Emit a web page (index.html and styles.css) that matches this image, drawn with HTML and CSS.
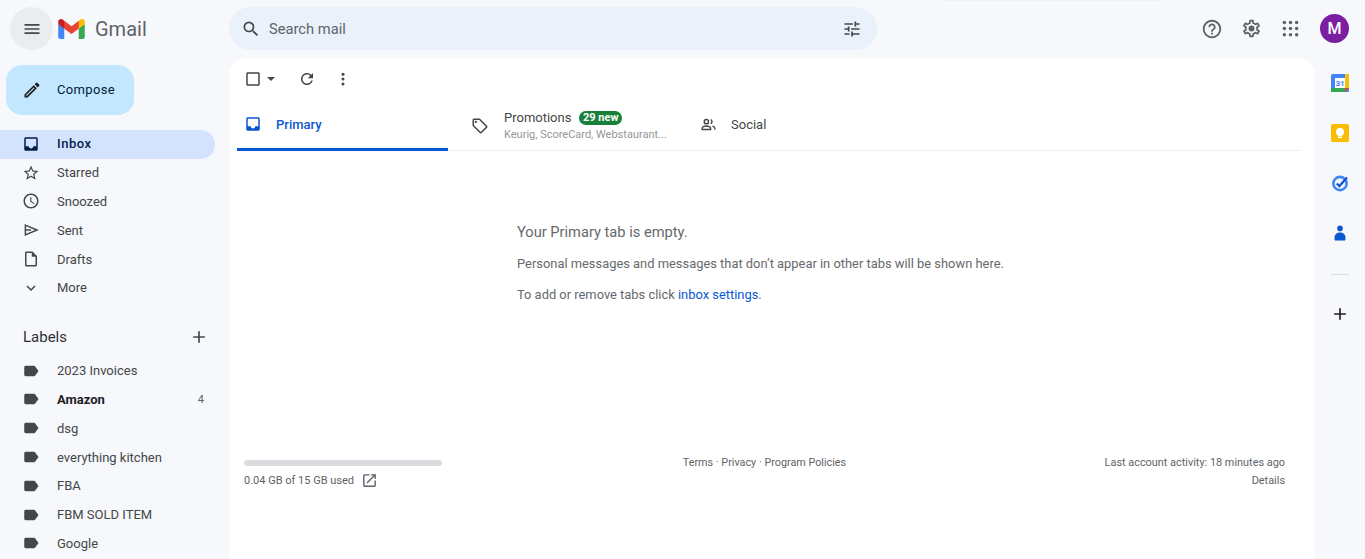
FILE: index.html
```html
<!DOCTYPE html>
<html lang="en">
<head>
  <meta charset="UTF-8">
  <title>Inbox - Gmail</title>
  <link rel="stylesheet" href="styles.css">
</head>
<body>
  <div class="app">
    <div class="top-hint"></div>

    <header class="topbar">
      <div class="brand">
        <button class="menu-btn">
          <svg class="ico" viewBox="0 0 24 24"><path d="M3 18h18v-2H3v2zm0-5h18v-2H3v2zm0-7v2h18V6H3z"/></svg>
        </button>
        <svg class="logo" viewBox="0 0 256 193">
          <path fill="#4285F4" d="M58.182 192.05V93.14L27.507 65.077 0 49.504v125.091c0 9.658 7.825 17.455 17.455 17.455h40.727z"/>
          <path fill="#34A853" d="M197.818 192.05h40.727c9.659 0 17.455-7.826 17.455-17.455V49.505l-31.156 17.837-27.026 25.798v98.91z"/>
          <path fill="#EA4335" d="M58.182 93.14l-4.174-38.647 4.174-36.989L128 69.868l69.818-52.364 4.669 34.992-4.669 40.644L128 145.504z"/>
          <path fill="#FBBC04" d="M197.818 17.504V93.14L256 49.504V26.231c0-21.585-24.64-33.89-41.89-20.945l-16.292 12.218z"/>
          <path fill="#C5221F" d="M0 49.504l26.759 20.07L58.182 93.14V17.504L41.89 5.286C24.61-7.66 0 4.646 0 26.23v23.273z"/>
        </svg>
        <span class="wordmark">Gmail</span>
      </div>

      <div class="search">
        <svg class="ico search-ico" viewBox="0 0 24 24"><path d="M15.5 14h-.79l-.28-.27A6.471 6.471 0 0 0 16 9.5 6.5 6.5 0 1 0 9.5 16c1.61 0 3.09-.59 4.23-1.57l.27.28v.79l5 4.99L20.49 19l-4.99-5zm-6 0C7.01 14 5 11.99 5 9.5S7.01 5 9.5 5 14 7.01 14 9.5 11.99 14 9.5 14z"/></svg>
        <span class="search-text">Search mail</span>
        <svg class="ico tune-ico" viewBox="0 0 24 24"><path d="M3 17v2h6v-2H3zM3 5v2h10V5H3zm10 16v-2h8v-2h-8v-2h-2v6h2zM7 9v2H3v2h4v2h2V9H7zm14 4v-2H11v2h10zm-6-4h2V7h4V5h-4V3h-2v6z"/></svg>
      </div>

      <div class="top-actions">
        <svg class="ico help-ico" viewBox="0 0 24 24"><path d="M11 18h2v-2h-2v2zm1-16C6.48 2 2 6.48 2 12s4.48 10 10 10 10-4.48 10-10S17.52 2 12 2zm0 18c-4.41 0-8-3.59-8-8s3.59-8 8-8 8 3.59 8 8-3.59 8-8 8zm0-14c-2.21 0-4 1.79-4 4h2c0-1.1.9-2 2-2s2 .9 2 2c0 2-3 1.75-3 5h2c0-2.25 3-2.5 3-5 0-2.21-1.79-4-4-4z"/></svg>
        <svg class="ico" viewBox="0 0 24 24"><path d="M19.43 12.98c.04-.32.07-.64.07-.98 0-.34-.03-.66-.07-.98l2.11-1.65c.19-.15.24-.42.12-.64l-2-3.46c-.09-.16-.26-.25-.44-.25-.06 0-.12.01-.17.03l-2.49 1c-.52-.4-1.08-.73-1.69-.98l-.38-2.65C14.46 2.18 14.25 2 14 2h-4c-.25 0-.46.18-.49.42l-.38 2.65c-.61.25-1.17.59-1.69.98l-2.49-1c-.06-.02-.12-.03-.18-.03-.17 0-.34.09-.43.25l-2 3.46c-.13.22-.07.49.12.64l2.11 1.65c-.04.32-.07.65-.07.98 0 .33.03.66.07.98l-2.11 1.65c-.19.15-.24.42-.12.64l2 3.46c.09.16.26.25.44.25.06 0 .12-.01.17-.03l2.49-1c.52.4 1.08.73 1.69.98l.38 2.65c.03.24.24.42.49.42h4c.25 0 .46-.18.49-.42l.38-2.65c.61-.25 1.17-.59 1.69-.98l2.49 1c.06.02.12.03.18.03.17 0 .34-.09.43-.25l2-3.46c.12-.22.07-.49-.12-.64l-2.11-1.65zm-1.98-1.71c.04.31.05.52.05.73 0 .21-.02.43-.05.73l-.14 1.13.89.7 1.08.84-.7 1.21-1.27-.51-1.04-.42-.9.68c-.43.32-.84.56-1.25.73l-1.06.43-.16 1.13-.2 1.35h-1.4l-.19-1.35-.16-1.13-1.06-.43c-.43-.18-.83-.41-1.23-.71l-.91-.7-1.06.43-1.27.51-.7-1.21 1.08-.84.89-.7-.14-1.13c-.03-.31-.05-.54-.05-.74s.02-.43.05-.73l.14-1.13-.89-.7-1.08-.84.7-1.21 1.27.51 1.04.42.9-.68c.43-.32.84-.56 1.25-.73l1.06-.43.16-1.13.2-1.35h1.39l.19 1.35.16 1.13 1.06.43c.43.18.83.41 1.23.71l.91.7 1.06-.43 1.27-.51.7 1.21-1.07.85-.89.7.14 1.13z"/><circle cx="12" cy="12" r="3.4"/></svg>
        <svg class="ico" viewBox="0 0 24 24"><circle cx="5" cy="5" r="2"/><circle cx="12" cy="5" r="2"/><circle cx="19" cy="5" r="2"/><circle cx="5" cy="12" r="2"/><circle cx="12" cy="12" r="2"/><circle cx="19" cy="12" r="2"/><circle cx="5" cy="19" r="2"/><circle cx="12" cy="19" r="2"/><circle cx="19" cy="19" r="2"/></svg>
        <div class="avatar">M</div>
      </div>
    </header>

    <nav class="sidebar">
      <button class="compose">
        <svg class="ico" viewBox="0 0 24 24"><path d="M3 17.25V21h3.75L17.81 9.94l-3.75-3.75L3 17.25zM5.92 19H5v-.92l9.06-9.06.92.92L5.92 19zM20.71 5.63l-2.34-2.34a1 1 0 0 0-1.41 0l-1.83 1.83 3.75 3.75 1.83-1.83a1 1 0 0 0 0-1.41z"/></svg>
        <span>Compose</span>
      </button>

      <ul class="nav-list">
        <li class="nav-item active">
          <svg class="ico" viewBox="0 0 24 24"><path d="M19 3H4.99C3.88 3 3 3.9 3 5v14c0 1.1.88 2 1.99 2H19c1.1 0 2-.9 2-2V5c0-1.1-.9-2-2-2zm0 12h-4c0 1.66-1.35 3-3 3s-3-1.34-3-3H4.99V5H19v10z"/></svg>
          <span>Inbox</span>
        </li>
        <li class="nav-item">
          <svg class="ico" viewBox="0 0 24 24"><path d="M22 9.24l-7.19-.62L12 2 9.19 8.63 2 9.24l5.46 4.73L5.82 21 12 17.27 18.18 21l-1.63-7.03L22 9.24zM12 15.4l-3.76 2.27 1-4.28-3.32-2.88 4.38-.38L12 6.1l1.71 4.04 4.38.38-3.32 2.88 1 4.28L12 15.4z"/></svg>
          <span>Starred</span>
        </li>
        <li class="nav-item">
          <svg class="ico" viewBox="0 0 24 24"><path d="M11.99 2C6.47 2 2 6.48 2 12s4.47 10 9.99 10C17.52 22 22 17.52 22 12S17.52 2 11.99 2zM12 20c-4.42 0-8-3.58-8-8s3.58-8 8-8 8 3.58 8 8-3.58 8-8 8zm.5-13H11v6l5.25 3.15.75-1.23-4.5-2.67z"/></svg>
          <span>Snoozed</span>
        </li>
        <li class="nav-item">
          <svg class="ico" viewBox="0 0 24 24"><path fill="none" stroke="#444746" stroke-width="2" d="M4.5 5.5L20 12 4.5 18.5zM4.5 12H12"/></svg>
          <span>Sent</span>
        </li>
        <li class="nav-item">
          <svg class="ico" viewBox="0 0 24 24"><path d="M14 2H6c-1.1 0-2 .9-2 2v16c0 1.1.9 2 2 2h12c1.1 0 2-.9 2-2V8l-6-6zM6 20V4h7v5h5v11H6z"/></svg>
          <span>Drafts</span>
        </li>
        <li class="nav-item">
          <svg class="ico" viewBox="0 0 24 24"><path d="M16.59 8.59L12 13.17 7.41 8.59 6 10l6 6 6-6z"/></svg>
          <span>More</span>
        </li>
      </ul>

      <div class="labels-head">
        <span>Labels</span>
        <svg class="ico" viewBox="0 0 24 24"><path d="M19 13h-6v6h-2v-6H5v-2h6V5h2v6h6v2z"/></svg>
      </div>

      <ul class="nav-list">
        <li class="nav-item">
          <svg class="ico" viewBox="0 0 24 24"><path d="M17.63 5.84C17.27 5.33 16.67 5 16 5L5 5.01C3.9 5.01 3 5.9 3 7v10c0 1.1.9 1.99 2 1.99L16 19c.67 0 1.27-.33 1.63-.84L22 12l-4.37-6.16z"/></svg>
          <span>2023 Invoices</span>
        </li>
        <li class="nav-item unread">
          <svg class="ico" viewBox="0 0 24 24"><path d="M17.63 5.84C17.27 5.33 16.67 5 16 5L5 5.01C3.9 5.01 3 5.9 3 7v10c0 1.1.9 1.99 2 1.99L16 19c.67 0 1.27-.33 1.63-.84L22 12l-4.37-6.16z"/></svg>
          <span>Amazon</span>
          <span class="count">4</span>
        </li>
        <li class="nav-item">
          <svg class="ico" viewBox="0 0 24 24"><path d="M17.63 5.84C17.27 5.33 16.67 5 16 5L5 5.01C3.9 5.01 3 5.9 3 7v10c0 1.1.9 1.99 2 1.99L16 19c.67 0 1.27-.33 1.63-.84L22 12l-4.37-6.16z"/></svg>
          <span>dsg</span>
        </li>
        <li class="nav-item">
          <svg class="ico" viewBox="0 0 24 24"><path d="M17.63 5.84C17.27 5.33 16.67 5 16 5L5 5.01C3.9 5.01 3 5.9 3 7v10c0 1.1.9 1.99 2 1.99L16 19c.67 0 1.27-.33 1.63-.84L22 12l-4.37-6.16z"/></svg>
          <span>everything kitchen</span>
        </li>
        <li class="nav-item">
          <svg class="ico" viewBox="0 0 24 24"><path d="M17.63 5.84C17.27 5.33 16.67 5 16 5L5 5.01C3.9 5.01 3 5.9 3 7v10c0 1.1.9 1.99 2 1.99L16 19c.67 0 1.27-.33 1.63-.84L22 12l-4.37-6.16z"/></svg>
          <span>FBA</span>
        </li>
        <li class="nav-item">
          <svg class="ico" viewBox="0 0 24 24"><path d="M17.63 5.84C17.27 5.33 16.67 5 16 5L5 5.01C3.9 5.01 3 5.9 3 7v10c0 1.1.9 1.99 2 1.99L16 19c.67 0 1.27-.33 1.63-.84L22 12l-4.37-6.16z"/></svg>
          <span>FBM SOLD ITEM</span>
        </li>
        <li class="nav-item">
          <svg class="ico" viewBox="0 0 24 24"><path d="M17.63 5.84C17.27 5.33 16.67 5 16 5L5 5.01C3.9 5.01 3 5.9 3 7v10c0 1.1.9 1.99 2 1.99L16 19c.67 0 1.27-.33 1.63-.84L22 12l-4.37-6.16z"/></svg>
          <span>Google</span>
        </li>
      </ul>
    </nav>

    <main class="mail">
      <div class="toolbar">
        <div class="select-box">
          <svg class="ico" viewBox="0 0 24 24"><path d="M19 5v14H5V5h14m0-2H5c-1.1 0-2 .9-2 2v14c0 1.1.9 2 2 2h14c1.1 0 2-.9 2-2V5c0-1.1-.9-2-2-2z"/></svg>
          <span class="caret"></span>
        </div>
        <svg class="ico" viewBox="0 0 24 24"><path d="M17.65 6.35A7.958 7.958 0 0 0 12 4c-4.42 0-7.99 3.58-7.99 8s3.57 8 7.99 8c3.73 0 6.84-2.55 7.73-6h-2.08A5.99 5.99 0 0 1 12 18c-3.31 0-6-2.69-6-6s2.69-6 6-6c1.66 0 3.14.69 4.22 1.78L13 11h7V4l-2.35 2.35z"/></svg>
        <svg class="ico" viewBox="0 0 24 24"><circle cx="12" cy="5.5" r="2"/><circle cx="12" cy="12" r="2"/><circle cx="12" cy="18.5" r="2"/></svg>
      </div>

      <div class="tabs">
        <div class="tab primary">
          <svg class="ico" viewBox="0 0 24 24"><path d="M19 3H4.99C3.88 3 3 3.9 3 5v14c0 1.1.88 2 1.99 2H19c1.1 0 2-.9 2-2V5c0-1.1-.9-2-2-2zm0 12h-4c0 1.66-1.35 3-3 3s-3-1.34-3-3H4.99V5H19v10z"/></svg>
          <span>Primary</span>
        </div>
        <div class="tab promotions">
          <svg class="ico" viewBox="0 0 24 24"><path d="M21.41 11.58l-9-9C12.05 2.22 11.55 2 11 2H4c-1.1 0-2 .9-2 2v7c0 .55.22 1.05.59 1.42l9 9c.36.36.86.58 1.41.58.55 0 1.05-.22 1.41-.59l7-7c.37-.36.59-.86.59-1.41 0-.55-.23-1.06-.59-1.42zM13 20.01L4 11V4h7v-.01l9 9-7 7.02z"/><circle cx="6.5" cy="6.5" r="1.5"/></svg>
          <div>
            <div class="promo-title">
              <span>Promotions</span>
              <span class="badge">29 new</span>
            </div>
            <div class="promo-sub">Keurig, ScoreCard, Webstaurant...</div>
          </div>
        </div>
        <div class="tab social">
          <svg class="ico" viewBox="0 0 24 24"><g fill="none" stroke="#444746" stroke-width="2"><circle cx="9" cy="8" r="3"/><path d="M3 19v-1.5C3 15.5 6 14 9 14s6 1.5 6 3.5V19zM15 5.2a3 3 0 0 1 0 5.6M17.5 14.3c2 .5 3.5 1.7 3.5 3.2V19"/></g></svg>
          <span>Social</span>
        </div>
      </div>

      <div class="empty">
        <h2>Your Primary tab is empty.</h2>
        <p>Personal messages and messages that don’t appear in other tabs will be shown here.</p>
        <p>To add or remove tabs click <a href="#">inbox settings</a>.</p>
      </div>

      <footer class="foot">
        <div class="storage">
          <div class="storage-bar"></div>
          <div class="storage-text">
            <span>0.04 GB of 15 GB used</span>
            <svg class="ico" viewBox="0 0 24 24"><path d="M19 19H5V5h7V3H5a2 2 0 0 0-2 2v14c0 1.1.9 2 2 2h14c1.1 0 2-.9 2-2v-7h-2v7zM14 3v2h3.59l-9.83 9.83 1.41 1.41L19 6.41V10h2V3h-7z"/></svg>
          </div>
        </div>
        <div class="foot-links">Terms · Privacy · Program Policies</div>
        <div class="activity">
          <div>Last account activity: 18 minutes ago</div>
          <div>Details</div>
        </div>
      </footer>
    </main>

    <aside class="rail">
      <svg class="rail-ico" viewBox="0 0 18 18">
        <rect width="18" height="18" rx="1.5" fill="#4285f4"/>
        <rect x="4" y="4" width="10" height="10" fill="#fff"/>
        <rect y="14" width="14" height="4" fill="#34a853"/>
        <rect x="14" width="4" height="14" fill="#fbbc04"/>
        <path d="M14 14h4l-4 4z" fill="#ea4335"/>
        <text x="9" y="12" class="cal-num">31</text>
      </svg>
      <svg class="rail-ico" viewBox="0 0 18 18">
        <rect width="18" height="18" rx="1.5" fill="#fbbc04"/>
        <circle cx="9" cy="8" r="4" fill="#fff"/>
        <rect x="7" y="12.4" width="4" height="1.8" fill="#fff"/>
      </svg>
      <svg class="rail-ico" viewBox="0 0 18 18">
        <circle cx="9" cy="9.5" r="6.6" fill="none" stroke="#4285f4" stroke-width="2.6"/>
        <path d="M5.8 9.5l2.6 2.6 7.6-8.6" fill="none" stroke="#0b57d0" stroke-width="2.2"/>
      </svg>
      <svg class="rail-ico" viewBox="0 0 18 18">
        <circle cx="9" cy="4.4" r="2.8" fill="#0b57d0"/>
        <path d="M3.6 15.5v-2.2C3.6 10.6 6.2 8.6 9 8.6s5.4 2 5.4 4.7v2.2c0 .6-.4 1-1 1H4.6c-.6 0-1-.4-1-1z" fill="#0b57d0"/>
      </svg>
      <div class="rail-line"></div>
      <svg class="ico rail-add" viewBox="0 0 24 24"><path d="M19 13h-6v6h-2v-6H5v-2h6V5h2v6h6v2z"/></svg>
    </aside>

  </div>
</body>
</html>
```

FILE: styles.css
```css
* {
  margin: 0;
  padding: 0;
  box-sizing: border-box;
}

html, body {
  height: 100%;
  overflow: hidden;
}

body {
  background-color: #f6f8fc;
  color: #444746;
  font-family: Roboto, "Liberation Sans", sans-serif;
  font-size: 13px;
}

ul {
  list-style: none;
}

button {
  border: 0;
  font-family: inherit;
}

.ico {
  display: block;
  width: 20px;
  height: 20px;
  flex: none;
  fill: #444746;
}

.app {
  display: grid;
  grid-template-columns: 229px 1fr 50px;
  grid-template-rows: 58px 1fr;
  height: 100%;
}

/* faint sliver of a notice at the very top edge */
.top-hint {
  position: absolute;
  top: 0;
  left: 940px;
  width: 225px;
  height: 1px;
  background-color: #f0f2f6;
}

/* top bar */
.topbar {
  grid-column: 1 / 4;
  display: flex;
  align-items: center;
  height: 57px;
}

.brand {
  display: flex;
  align-items: center;
  width: 229px;
  padding-left: 10px;
}

.menu-btn {
  display: flex;
  align-items: center;
  justify-content: center;
  width: 43px;
  height: 43px;
  border-radius: 50%;
  background-color: #ebecef;
}

.logo {
  width: 27px;
  height: 20px;
  margin-left: 5px;
}

.wordmark {
  margin-left: 10px;
  font-size: 20px;
  color: #5f6368;
}

.search {
  display: flex;
  align-items: center;
  width: 648px;
  height: 43px;
  padding: 0 15px 0 12px;
  border-radius: 22px;
  background-color: #eaf1fb;
}

.search-text {
  flex: 1;
  margin-left: 8px;
  font-size: 14.7px;
  color: #5f6368;
}

.top-actions {
  display: flex;
  align-items: center;
  margin-left: auto;
  padding-right: 16px;
  gap: 18px;
}

.top-actions .ico {
  width: 21px;
  height: 21px;
  fill: #5f6368;
}

.top-actions .help-ico {
  width: 22px;
  height: 22px;
}

.avatar {
  width: 29px;
  height: 29px;
  margin-left: 1px;
  border-radius: 50%;
  background-color: #7b1fa2;
  color: #fff;
  font-size: 16px;
  font-weight: 500;
  line-height: 29px;
  text-align: center;
}

/* sidebar */
.sidebar {
  overflow: hidden;
}

.compose {
  display: flex;
  align-items: center;
  width: 128px;
  height: 50px;
  margin: 7px 0 15px 6px;
  padding: 0 0 1px 16px;
  border-radius: 16px;
  background-color: #c2e7ff;
  color: #001d35;
  font-size: 13px;
  letter-spacing: .35px;
  gap: 15px;
}

.compose .ico {
  fill: #1f1f1f;
}

.nav-item {
  display: flex;
  align-items: center;
  width: 215px;
  height: 28.8px;
  padding: 0 11px 1px 22px;
  border-radius: 0 16px 16px 0;
  gap: 17px;
}

.nav-item .ico {
  width: 18px;
  height: 18px;
}

.nav-item.active {
  background-color: #d3e3fd;
  color: #041e49;
  font-weight: 500;
  letter-spacing: .5px;
}

.nav-item.active .ico {
  fill: #041e49;
}

.nav-item.unread {
  color: #202124;
  font-weight: 700;
}

.count {
  margin-left: auto;
  font-size: 11px;
  font-weight: 400;
  color: #5f6368;
}

.labels-head {
  display: flex;
  align-items: center;
  justify-content: space-between;
  width: 215px;
  height: 36px;
  margin-top: 16px;
  margin-bottom: 2px;
  padding: 0 6px 0 23px;
  font-size: 15px;
  color: #303134;
}

/* mail panel */
.mail {
  display: flex;
  flex-direction: column;
  padding: 0 14px 0 8px;
  border-radius: 16px 16px 0 0;
  background-color: #fff;
  overflow: hidden;
}

.toolbar {
  display: flex;
  align-items: center;
  height: 42px;
  padding-left: 7px;
}

.toolbar .ico {
  width: 18px;
  height: 18px;
  margin-right: 18px;
}

.select-box {
  display: flex;
  align-items: center;
  width: 54px;
}

.select-box .ico {
  margin-right: 5px;
}

.caret {
  width: 0;
  height: 0;
  border-top: 4px solid #444746;
  border-left: 4px solid transparent;
  border-right: 4px solid transparent;
}

.tabs {
  display: flex;
  height: 51px;
  border-bottom: 1px solid #eceff1;
}

.tab {
  display: flex;
  align-items: center;
  height: 48px;
}

.tab .ico {
  width: 18px;
  height: 18px;
}

.primary {
  width: 211px;
  height: 51px;
  padding-left: 7px;
  border-bottom: 3px solid #0b57d0;
  color: #0b57d0;
  font-weight: 500;
  gap: 14px;
}

.primary .ico {
  fill: #0b57d0;
}

.promotions {
  width: 252px;
  height: 51px;
  padding-left: 23px;
  gap: 15px;
}

.promo-title {
  display: flex;
  align-items: center;
  gap: 8px;
}

.badge {
  padding: 0 3.5px;
  border-radius: 8px;
  background-color: #188038;
  color: #fff;
  font-size: 11px;
  font-weight: 700;
  line-height: 14px;
}

.promo-sub {
  margin-top: 3px;
  font-size: 11px;
  color: #949799;
}

.social {
  gap: 14px;
}

.social .ico {
  width: 17px;
  height: 17px;
}

.empty {
  padding: 72px 0 0 280px;
  color: #65696d;
}

.empty h2 {
  font-size: 14.65px;
  font-weight: 400;
  line-height: 18px;
  margin-bottom: 14px;
}

.empty p {
  font-size: 12.9px;
  line-height: 17px;
  margin-bottom: 14px;
}

.empty a {
  color: #0b57d0;
  text-decoration: none;
}

.foot {
  display: grid;
  grid-template-columns: 1fr 1fr 1fr;
  margin-top: 136px;
  padding: 0 16px 0 7px;
  font-size: 10.9px;
  color: #5f6368;
}

.storage-bar {
  width: 198px;
  height: 6px;
  margin-top: 7px;
  border-radius: 3px;
  background-color: #dadce0;
}

.storage-text {
  display: flex;
  align-items: center;
  margin-top: 6px;
  font-size: 11px;
  gap: 7px;
}

.storage-text .ico {
  width: 17px;
  height: 17px;
  fill: #5f6368;
}

.foot-links {
  margin-top: 3px;
  font-size: 10.8px;
  text-align: center;
}

.activity {
  margin-top: 1px;
  line-height: 18px;
  text-align: right;
}

/* right rail */
.rail {
  display: flex;
  flex-direction: column;
  align-items: center;
  padding: 16px 0 0 0;
}

.rail-ico {
  display: block;
  width: 18px;
  height: 18px;
  margin-bottom: 32px;
}

.cal-num {
  font-size: 8px;
  font-weight: 700;
  fill: #4285f4;
  text-anchor: middle;
}

.rail-line {
  width: 18px;
  height: 1px;
  background-color: #dadce0;
}

.rail-add {
  margin-top: 29px;
  fill: #1f1f1f;
}
```
